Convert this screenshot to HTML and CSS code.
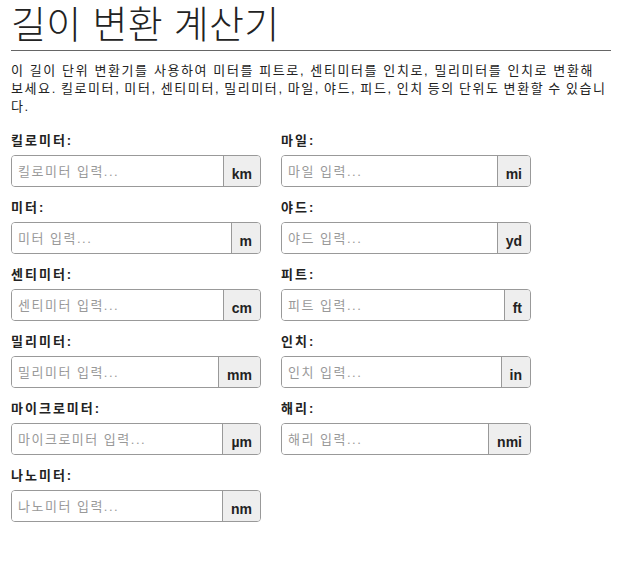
FILE: index.html
```html
<!DOCTYPE html>
<html lang="ko">
<head>
<meta charset="utf-8">
<title>길이 변환 계산기</title>
<link rel="stylesheet" href="styles.css">
</head>
<body>
<div class="page">
  <h1 class="title">길이 변환 계산기</h1>
  <p class="intro">이 길이 단위 변환기를 사용하여 미터를 피트로, 센티미터를 인치로, 밀리미터를 인치로 변환해 보세요. 킬로미터, 미터, 센티미터, 밀리미터, 마일, 야드, 피드, 인치 등의 단위도 변환할 수 있습니다.</p>
  <div class="grid">
    <div class="field"><label class="label">킬로미터:</label><div class="group"><input class="input" placeholder="킬로미터 입력..."><span class="unit">km</span></div></div>
    <div class="field"><label class="label">마일:</label><div class="group"><input class="input" placeholder="마일 입력..."><span class="unit">mi</span></div></div>
    <div class="field"><label class="label">미터:</label><div class="group"><input class="input" placeholder="미터 입력..."><span class="unit">m</span></div></div>
    <div class="field"><label class="label">야드:</label><div class="group"><input class="input" placeholder="야드 입력..."><span class="unit">yd</span></div></div>
    <div class="field"><label class="label">센티미터:</label><div class="group"><input class="input" placeholder="센티미터 입력..."><span class="unit">cm</span></div></div>
    <div class="field"><label class="label">피트:</label><div class="group"><input class="input" placeholder="피트 입력..."><span class="unit">ft</span></div></div>
    <div class="field"><label class="label">밀리미터:</label><div class="group"><input class="input" placeholder="밀리미터 입력..."><span class="unit">mm</span></div></div>
    <div class="field"><label class="label">인치:</label><div class="group"><input class="input" placeholder="인치 입력..."><span class="unit">in</span></div></div>
    <div class="field"><label class="label">마이크로미터:</label><div class="group"><input class="input" placeholder="마이크로미터 입력..."><span class="unit">µm</span></div></div>
    <div class="field"><label class="label">해리:</label><div class="group"><input class="input" placeholder="해리 입력..."><span class="unit">nmi</span></div></div>
    <div class="field"><label class="label">나노미터:</label><div class="group"><input class="input" placeholder="나노미터 입력..."><span class="unit">nm</span></div></div>
  </div>
</div>
</body>
</html>
```
FILE: styles.css
```css
html, body {
  margin: 0;
  padding: 0;
  background: #fff;
}
body {
  font-family: "Liberation Sans", "Noto Sans CJK KR", sans-serif;
  color: #222;
}
.page {
  width: 600px;
  margin-left: 11px;
}
.title {
  font-size: 38px;
  font-weight: 300;
  letter-spacing: 0.3px;
  margin: 2px 0 0;
  padding-bottom: 2px;
  line-height: 46px;
  border-bottom: 1px solid #666;
  color: #222;
}
.intro {
  font-size: 13px;
  line-height: 18px;
  letter-spacing: 1.6px;
  word-spacing: -1.2px;
  margin: 11px 0 16px;
}
.intro::first-line {
  word-spacing: 0;
}
.grid {
  display: grid;
  grid-template-columns: 250px 250px;
  column-gap: 20px;
  row-gap: 12px;
}
.field {
  display: flex;
  flex-direction: column;
}
.label {
  font-size: 13px;
  font-weight: bold;
  line-height: 18px;
  letter-spacing: 2px;
  margin-bottom: 5px;
}
.group {
  display: flex;
  height: 32px;
  box-sizing: border-box;
  border: 1px solid #999;
  border-radius: 4px;
  overflow: hidden;
}
.input {
  flex: 1;
  min-width: 0;
  border: none;
  outline: none;
  padding: 0 6px;
  font-family: "Liberation Sans", "Noto Sans CJK KR", sans-serif;
  font-size: 13px;
  letter-spacing: 1.5px;
  color: #222;
  background: #fff;
}
.input::placeholder {
  color: #999;
}
.unit {
  display: flex;
  align-items: flex-end;
  padding: 0 8px 4px;
  background: #eee;
  border-left: 1px solid #999;
  font-size: 14px;
  font-weight: bold;
  color: #222;
}
```
